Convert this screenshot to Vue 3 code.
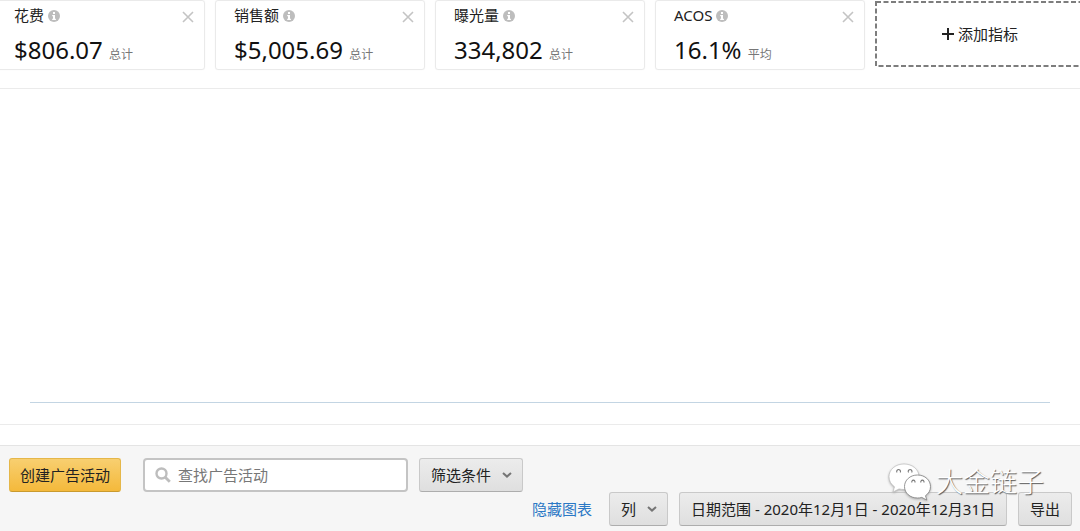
<script setup>
import { ref } from 'vue'

const metrics = ref([
  { name: '花费', value: '$806.07', unit: '总计' },
  { name: '销售额', value: '$5,005.69', unit: '总计' },
  { name: '曝光量', value: '334,802', unit: '总计' },
  { name: 'ACOS', value: '16.1%', unit: '平均' },
])
const query = ref('')

function removeMetric(name) {
  metrics.value = metrics.value.filter((m) => m.name !== name)
}
</script>

<template>
  <main class="page">
    <section class="metrics">
      <article v-for="m in metrics" :key="m.name" class="card">
        <header class="card-head">
          <h2 class="card-name">{{ m.name }}</h2>
          <svg class="info" viewBox="0 0 12 12" aria-hidden="true">
            <circle cx="6" cy="6" r="6" fill="#bdbdbd" />
            <path d="M5 2h2v2H5zM4.2 5H7v3.8h.9V10H4.2V8.800H5V6.200h-.8z" fill="#fff" />
          </svg>
          <button class="close" type="button" :aria-label="'移除' + m.name" @click="removeMetric(m.name)">
            <svg viewBox="0 0 12 12" aria-hidden="true">
              <path d="M1 1l10 10M11 1L1 11" stroke="#c4c4c4" stroke-width="1.6" fill="none" />
            </svg>
          </button>
        </header>
        <p class="card-value">{{ m.value }} <span class="unit">{{ m.unit }}</span></p>
      </article>
      <button class="add" type="button">
        <svg class="dashes" aria-hidden="true">
          <rect width="100%" height="100%" fill="none" stroke="#7d7d7d" stroke-width="2" stroke-dasharray="5 2.500" />
        </svg>
        <svg class="plus" viewBox="0 0 12 12" aria-hidden="true">
          <path d="M6 0v12M0 6h12" stroke="#222" stroke-width="2" />
        </svg>
        添加指标
      </button>
    </section>

    <section class="chart" aria-label="图表">
      <div class="plot"></div>
    </section>

    <section class="toolbar">
      <div class="row">
        <button class="btn primary" type="button">创建广告活动</button>
        <label class="search">
          <svg viewBox="0 0 16 16" aria-hidden="true">
            <circle cx="6.500" cy="6.500" r="5" fill="none" stroke="#bdbdbd" stroke-width="2.400" />
            <path d="M10.200 10.200l4.600 4.600" stroke="#bdbdbd" stroke-width="2.800" />
          </svg>
          <input v-model="query" type="text" placeholder="查找广告活动" aria-label="查找广告活动" />
        </label>
        <div class="drop">
          <select class="btn" aria-label="筛选条件">
            <option>筛选条件</option>
          </select>
          <svg viewBox="0 0 10 6" aria-hidden="true">
            <path d="M1 1l4 3.600L9 1" fill="none" stroke="#757575" stroke-width="2" />
          </svg>
        </div>
      </div>
      <div class="row end">
        <a class="link" href="#">隐藏图表</a>
        <div class="drop">
          <select class="btn" aria-label="列">
            <option>列</option>
          </select>
          <svg viewBox="0 0 10 6" aria-hidden="true">
            <path d="M1 1l4 3.600L9 1" fill="none" stroke="#757575" stroke-width="2" />
          </svg>
        </div>
        <button class="btn" type="button">日期范围 - 2020年12月1日 - 2020年12月31日</button>
        <button class="btn" type="button">导出</button>
      </div>
      <div class="mark">
        <svg viewBox="0 0 44 38" aria-hidden="true">
          <g fill="#fff" stroke="#b5b5b5" stroke-width="0.6" stroke-linejoin="round">
            <path d="M16 1C7.500 1 1 6.600 1 13.800c0 4.200 2.200 7.600 5.500 10L5 29l6-3.100c1.600.4 3.300.6 5 .6 8.500 0 15-5.500 15-12.700S24.500 1 16 1z" />
            <path stroke="#8a8a8a" stroke-width="0.9" d="M29.500 12C22 12 16.500 17.200 16.500 23.600S22 35 29.500 35c1.600 0 3-.2 4.300-.6l5 2.700-1.300-4.400c3.200-2.200 5-5.300 5-9.100C42.500 17.200 37 12 29.500 12z" />
          </g>
          <g fill="#fff" stroke="#777" stroke-width="1.100">
            <path d="M9 9.500a1.900 1.900 0 1 1 3.200 0M20.500 9.500a1.900 1.900 0 1 1 3.200 0M24 19.500a1.600 1.600 0 1 1 2.800 0M33 19.500a1.600 1.600 0 1 1 2.800 0" />
          </g>
        </svg>
        <span>大金链子</span>
      </div>
    </section>
  </main>
</template>

<style>
body {
  margin: 0;
  background: #fff;
}
</style>

<style scoped>
.page,
.page button,
.page input,
.page select {
  font-family: "Noto Sans", "Noto Sans CJK SC", sans-serif;
  font-size: 15px;
  line-height: 20px;
  color: #222;
}
.page {
  min-height: 100vh;
  display: flex;
  flex-direction: column;
  overflow: hidden;
}
.metrics {
  display: grid;
  grid-template-columns: repeat(5, minmax(0, 1fr));
  gap: 10px;
  margin: 0 -5px;
  padding-bottom: 18px;
  border-bottom: 1px solid #ebebeb;
}
.card {
  box-sizing: border-box;
  height: 70px;
  padding: 4px 10px 0 18px;
  border: 1px solid #eaeaea;
  border-radius: 3px;
  box-shadow: 0 0 1px #ececec;
}
.card-head {
  display: flex;
  align-items: center;
}
.card-name {
  margin: 0;
  font-size: 15px;
  font-weight: 400;
}
.info {
  width: 12px;
  height: 12px;
  margin-left: 4px;
  padding-top: 2px;
}
.close {
  display: flex;
  margin-left: auto;
  padding: 3px 0 0;
  border: 0;
  background: none;
}
.close svg {
  width: 12px;
  height: 12px;
}
.card-value {
  margin: 8px 0 0;
  font-size: 24px;
  line-height: 34px;
  color: #111;
  white-space: nowrap;
}
.unit {
  font-size: 12px;
  color: #777;
}
.add {
  position: relative;
  display: flex;
  align-items: center;
  justify-content: center;
  gap: 4px;
  margin: 2px 1px 4px;
  padding: 0;
  border: 0;
  background: #fff;
}
.dashes {
  position: absolute;
  inset: 0;
  width: 100%;
  height: 100%;
  overflow: visible;
}
.plus {
  width: 12px;
  height: 12px;
}
.chart {
  padding: 0 30px 21px;
  border-bottom: 1px solid #ebebeb;
}
.plot {
  height: 313px;
  border-bottom: 1px solid #c3d5e3;
}
.toolbar {
  position: relative;
  flex: 1;
  margin-top: 20px;
  padding: 12px 8px 5px 9px;
  border-top: 1px solid #e4e4e4;
  background: #f6f6f6;
}
.row {
  display: flex;
  align-items: center;
}
.row.end {
  justify-content: flex-end;
  gap: 11px;
}
.page .btn {
  box-sizing: border-box;
  height: 34px;
  padding: 0 11px;
  border: 1px solid #c9c9c9;
  border-bottom-color: #adadad;
  border-radius: 3px;
  background: linear-gradient(#ececec, #dfdfdf);
  white-space: nowrap;
}
.page .btn.primary {
  padding: 0 10px;
  border-color: #e5b749;
  border-bottom-color: #c99a2e;
  background: linear-gradient(#f8cf70, #f4b93b);
}
.search {
  position: relative;
  width: 265px;
  margin: 0 11px 0 22px;
}
.search svg {
  position: absolute;
  left: 12px;
  top: 9px;
  width: 16px;
  height: 16px;
}
.search input {
  display: block;
  box-sizing: border-box;
  width: 100%;
  height: 34px;
  padding: 0 10px 0 33px;
  border: 2px solid #c4c4c4;
  border-radius: 4px;
  background: #fff;
}
.search input::placeholder {
  color: #777;
  opacity: 1;
}
.drop {
  position: relative;
}
.page .drop .btn {
  display: block;
  appearance: none;
  padding: 0 30px 0 11px;
}
.drop svg {
  position: absolute;
  right: 11px;
  top: 14px;
  width: 10px;
  height: 6px;
  pointer-events: none;
}
.link {
  margin-right: 6px;
  color: #2b78c5;
  text-decoration: none;
}
.mark {
  position: absolute;
  right: 36px;
  top: 17px;
  display: flex;
  align-items: center;
  gap: 4px;
  color: #fff;
  font-size: 27px;
  font-weight: 300;
  line-height: 38px;
  text-shadow: 1px 1px 1px #555;
  pointer-events: none;
}
.mark svg {
  width: 44px;
  height: 38px;
  filter: drop-shadow(0 1px 1px #aaa);
}
</style>
